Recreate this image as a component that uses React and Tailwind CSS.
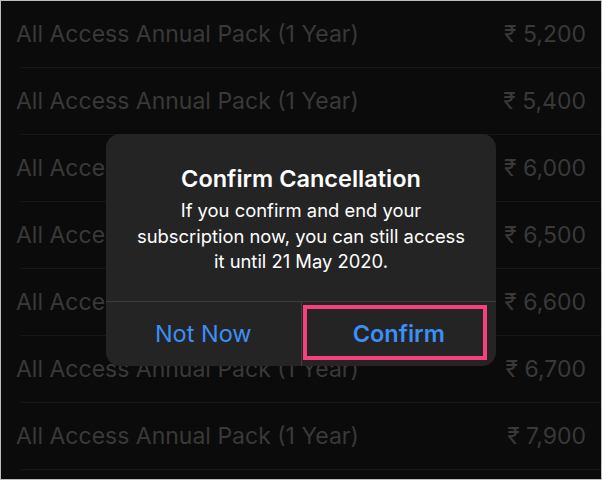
const rows = ['5,200', '5,400', '6,000', '6,500', '6,600', '6,700', '7,900'];

export default function App() {
  return (
    <div
      className="relative w-[602px] h-[480px] overflow-hidden border border-[#bdbdbd] bg-[#0b0b0b]"
      style={{ fontFamily: 'Inter, "Liberation Sans", Arial, sans-serif' }}
    >
      <div className="flex flex-col">
        {rows.map((price, i) => (
          <div key={i}>
            <div className="flex h-[66px] items-center justify-between pl-[15px] pr-[15px] text-[23px] text-[#393939]">
              <span>All Access Annual Pack (1 Year)</span>
              <span>₹ {price}</span>
            </div>
            <div className="ml-[20px] h-px bg-[#171717]" />
          </div>
        ))}
      </div>

      <div className="absolute left-[105px] top-[133px] w-[390px] h-[232px] rounded-[14px] bg-[#242424] flex flex-col">
        <div className="flex flex-col items-center px-2 pt-[31px] h-[167px] text-center text-white">
          <div className="text-[23.5px] leading-[28px] font-semibold">Confirm Cancellation</div>
          <div className="mt-[5px] text-[18.4px] leading-[25.5px]">
            If you confirm and end your
            <br />
            subscription now, you can still access
            <br />
            it until 21 May 2020.
          </div>
        </div>
        <div className="h-px bg-[#3d3d3d]" />
        <div className="relative flex flex-1">
          <div className="flex flex-1 items-center justify-center text-[23.5px] text-[#3d8ef5]">Not Now</div>
          <div className="w-px bg-[#3d3d3d]" />
          <div className="flex flex-1 items-center justify-center text-[23.5px] font-semibold text-[#3d8ef5]">Confirm</div>
          <div className="absolute left-[197px] top-[3px] w-[184px] h-[55px] border-[4px] border-[#f7407e]" />
        </div>
      </div>
    </div>
  );
}
